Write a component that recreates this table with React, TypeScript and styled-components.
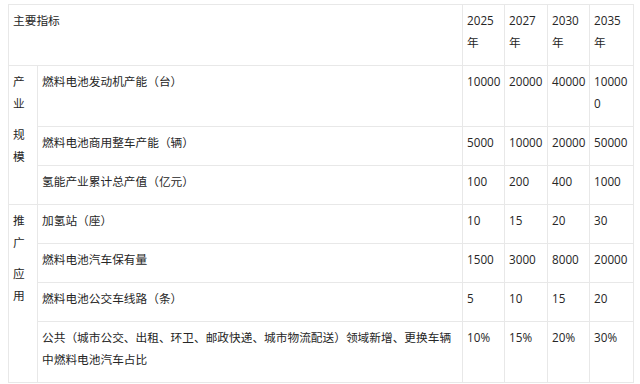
import React from "react";
import styled, { createGlobalStyle } from "styled-components";

const Global = createGlobalStyle`
  html, body { margin: 0; padding: 0; background: #fff; }
  body {
    font-family: "Open Sans", "Noto Sans CJK SC", sans-serif;
    color: #262626;
  }
`;

const Page = styled.div`
  padding: 4px 7px 0 8px;
`;

const Table = styled.table`
  width: 625px;
  table-layout: fixed;
  border-collapse: collapse;
  font-size: 11.7px;
  line-height: 22px;
`;

const Cell = styled.td`
  border: 1px solid #e8e8e8;
  padding: 4px 3px 3px 4px;
  vertical-align: top;
  text-align: left;
  word-break: break-all;
`;

const Para = styled.p`
  margin: 0 0 9px;
`;

type Row = { name: string; values: string[] };

const years = ["2025年", "2027年", "2030年", "2035年"];

const groups: { label: [string, string]; rows: Row[] }[] = [
  {
    label: ["产业", "规模"],
    rows: [
      { name: "燃料电池发动机产能（台）", values: ["10000", "20000", "40000", "100000"] },
      { name: "燃料电池商用整车产能（辆）", values: ["5000", "10000", "20000", "50000"] },
      { name: "氢能产业累计总产值（亿元）", values: ["100", "200", "400", "1000"] },
    ],
  },
  {
    label: ["推广", "应用"],
    rows: [
      { name: "加氢站（座）", values: ["10", "15", "20", "30"] },
      { name: "燃料电池汽车保有量", values: ["1500", "3000", "8000", "20000"] },
      { name: "燃料电池公交车线路（条）", values: ["5", "10", "15", "20"] },
      {
        name: "公共（城市公交、出租、环卫、邮政快递、城市物流配送）领域新增、更换车辆中燃料电池汽车占比",
        values: ["10%", "15%", "20%", "30%"],
      },
    ],
  },
];

export default function App() {
  return (
    <Page>
      <Global />
      <Table>
        <colgroup>
          <col style={{ width: 29 }} />
          <col style={{ width: 425 }} />
          <col style={{ width: 42 }} />
          <col style={{ width: 43 }} />
          <col style={{ width: 42 }} />
          <col style={{ width: 44 }} />
        </colgroup>
        <tbody>
          <tr>
            <Cell colSpan={2}>
              <Para>主要指标</Para>
            </Cell>
            {years.map((y) => (
              <Cell key={y}>
                <Para>{y}</Para>
              </Cell>
            ))}
          </tr>
          {groups.map((g) =>
            g.rows.map((r, i) => (
              <tr key={r.name}>
                {i === 0 && (
                  <Cell rowSpan={g.rows.length}>
                    <Para>{g.label[0]}</Para>
                    <Para>{g.label[1]}</Para>
                  </Cell>
                )}
                <Cell>
                  <Para>{r.name}</Para>
                </Cell>
                {r.values.map((v, j) => (
                  <Cell key={j}>
                    <Para>{v}</Para>
                  </Cell>
                ))}
              </tr>
            ))
          )}
        </tbody>
      </Table>
    </Page>
  );
}
